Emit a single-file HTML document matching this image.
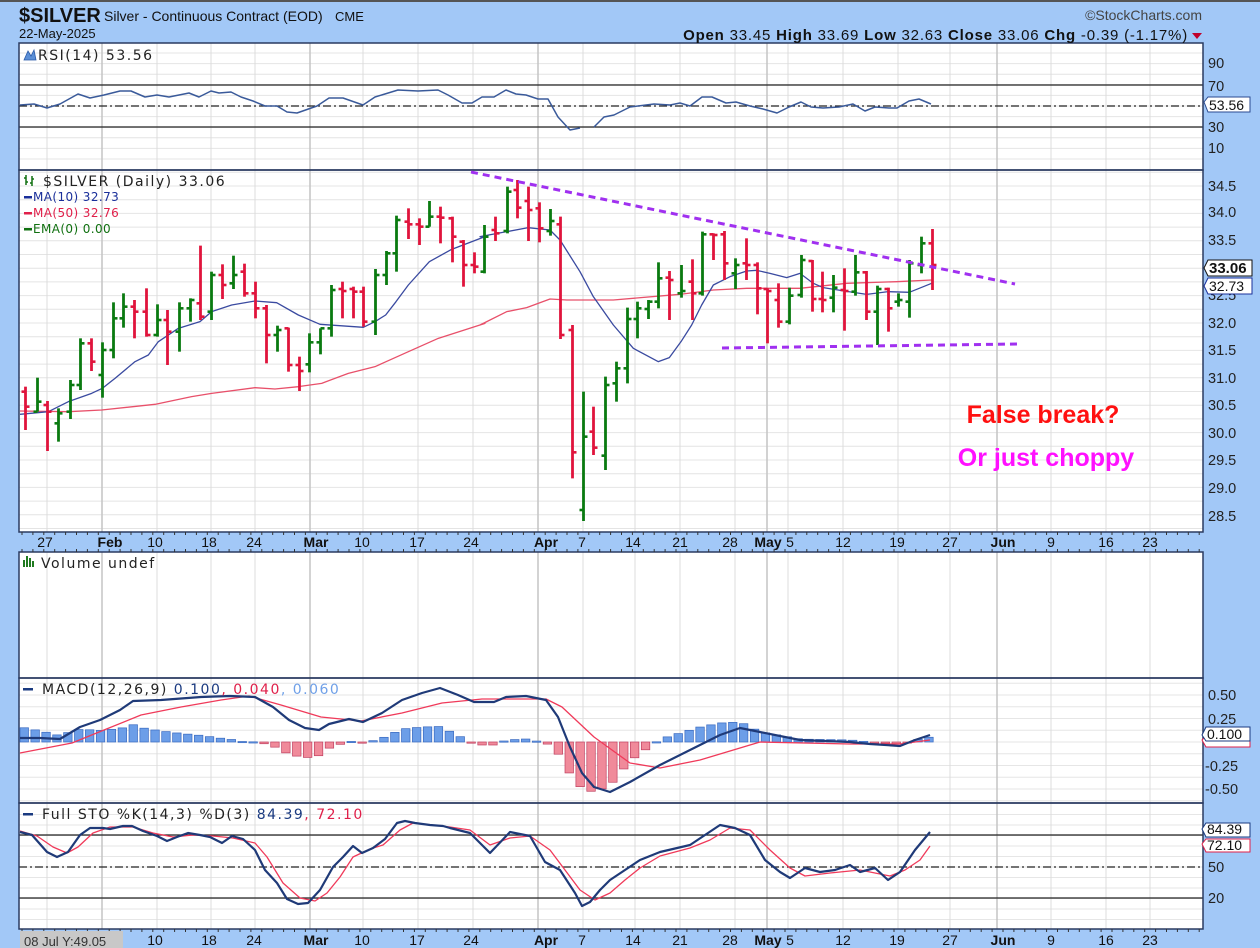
<!DOCTYPE html>
<html><head><meta charset="utf-8">
<style>
html,body{margin:0;padding:0;background:#a2c8f7;}
body{width:1260px;height:948px;overflow:hidden;position:relative;font-family:"Liberation Sans",sans-serif;}
svg{position:absolute;left:0;top:0;}
</style></head>
<body>
<svg id="s" width="1260" height="948" xmlns="http://www.w3.org/2000/svg" font-family="Liberation Sans, sans-serif">
<rect x="0" y="0" width="1260" height="2" fill="#555"/>
<g id="panels"></g>
<g id="grid"></g>
<g id="lines"></g>
<g id="data"></g>
<g id="txt">
<text x="19" y="22" font-size="20" font-weight="bold" fill="#111">$SILVER</text>
<text x="104" y="21" font-size="14" fill="#111">Silver - Continuous Contract (EOD)</text>
<text x="335" y="21" font-size="13" fill="#111">CME</text>
<text x="19" y="38" font-size="13" fill="#111">22-May-2025</text>
<text x="1202" y="20" font-size="14" fill="#444" text-anchor="end">©StockCharts.com</text>
<text x="1188" y="40" font-size="15" letter-spacing="0.8" fill="#111" text-anchor="end"><tspan font-weight="bold">Open</tspan> 33.45  <tspan font-weight="bold">High</tspan> 33.69  <tspan font-weight="bold">Low</tspan> 32.63  <tspan font-weight="bold">Close</tspan> 33.06  <tspan font-weight="bold">Chg</tspan> -0.39 (-1.17%)</text>
<path d="M1192,33 L1202,33 L1197,39 Z" fill="#c0002a"/>
<g font-family="DejaVu Sans, sans-serif" font-size="14" letter-spacing="1.5">
<text x="38" y="60" fill="#222">RSI(14) 53.56</text>
<path d="M24,60 L28,51 L31,56 L34,50 L36,60 Z" fill="#5b8fd6" stroke="#2a5aa8" stroke-width="0.8"/>
<text x="43" y="186" fill="#222">$SILVER (Daily) 33.06</text>
<g stroke="#107010" stroke-width="1.5"><path d="M26,175v10M24,178h2M26,182h2M32,176v10M30,183h2M32,179h2"/></g>
<g font-size="12" letter-spacing="0.4">
<rect x="24" y="196" width="8" height="2.5" fill="#1a2f9a"/><text x="33" y="201" fill="#1a2f9a">MA(10) 32.73</text>
<rect x="24" y="212" width="8" height="2.5" fill="#e0204a"/><text x="33" y="217" fill="#e0204a">MA(50) 32.76</text>
<rect x="24" y="228" width="8" height="2.5" fill="#107010"/><text x="33" y="233" fill="#107010">EMA(0) 0.00</text>
</g>
<g fill="#207a20"><rect x="23" y="560" width="2" height="7"/><rect x="26" y="556" width="2" height="11"/><rect x="29" y="558" width="2" height="9"/><rect x="32" y="561" width="2" height="6"/></g>
<text x="41" y="568" fill="#222">Volume undef</text>
<rect x="23" y="688" width="10" height="2.5" fill="#1a3a80"/>
<text x="42" y="694" fill="#222">MACD(12,26,9) <tspan fill="#1a3a80">0.100</tspan><tspan fill="#e0204a">, 0.040</tspan><tspan fill="#6fa0e8">, 0.060</tspan></text>
<rect x="23" y="813" width="10" height="2.5" fill="#1a3a80"/>
<text x="42" y="819" fill="#222">Full STO %K(14,3) %D(3) <tspan fill="#1a3a80">84.39</tspan><tspan fill="#e0204a">, 72.10</tspan></text>
</g>
<text x="1043" y="423" font-size="25" font-weight="bold" fill="#ff1010" text-anchor="middle">False break?</text>
<text x="1046" y="466" font-size="25" font-weight="bold" fill="#ff10ff" text-anchor="middle">Or just choppy</text>
<g font-size="14.5" fill="#222" id="axisR">
<text x="1208" y="68">90</text><text x="1208" y="91">70</text><text x="1208" y="132">30</text><text x="1208" y="153">10</text>
<text x="1208" y="191">34.5</text><text x="1208" y="217">34.0</text><text x="1208" y="245">33.5</text><text x="1208" y="300">32.5</text><text x="1208" y="328">32.0</text><text x="1208" y="355">31.5</text><text x="1208" y="383">31.0</text><text x="1208" y="410">30.5</text><text x="1208" y="438">30.0</text><text x="1208" y="465">29.5</text><text x="1208" y="493">29.0</text><text x="1208" y="521">28.5</text>
<text x="1208" y="700">0.50</text><text x="1208" y="724">0.25</text><text x="1205" y="771">-0.25</text><text x="1205" y="794">-0.50</text>
<text x="1208" y="872">50</text><text x="1208" y="903">20</text>
</g>
<g font-size="14">
<path d="M1204,102 L1208,97 L1250,97 L1250,112 L1208,112 Z" fill="#fff" stroke="#2a4a90"/><text x="1209" y="110" fill="#111">53.56</text>
<path d="M1204,268 L1208,260 L1252,260 L1252,276 L1208,276 Z" fill="#fff" stroke="#111"/><text x="1209" y="273" font-weight="bold" fill="#111" font-size="15">33.06</text>
<path d="M1204,286 L1208,278 L1252,278 L1252,294 L1208,294 Z" fill="#fff" stroke="#1a2f9a"/><text x="1209" y="291" fill="#111">32.73</text>
<path d="M1202,740 L1206,736 L1250,736 L1250,747 L1206,747 Z" fill="#fff" stroke="#e0204a"/>
<path d="M1202,735 L1206,727 L1250,727 L1250,741 L1206,741 Z" fill="#fff" stroke="#1a3a80"/><text x="1207" y="739" fill="#111">0.100</text>
<path d="M1202,844 L1206,839 L1250,839 L1250,852 L1206,852 Z" fill="#fff" stroke="#e0204a"/><text x="1207" y="850" fill="#111">72.10</text>
<path d="M1202,829 L1206,823 L1250,823 L1250,837 L1206,837 Z" fill="#fff" stroke="#1a3a80"/><text x="1207" y="834" fill="#111">84.39</text>
</g>
<g font-size="14" fill="#111" text-anchor="middle">
<text x="45" y="547">27</text><text x="110" y="547" font-weight="bold">Feb</text><text x="155" y="547">10</text><text x="209" y="547">18</text><text x="254" y="547">24</text><text x="316" y="547" font-weight="bold">Mar</text><text x="362" y="547">10</text><text x="417" y="547">17</text><text x="471" y="547">24</text><text x="546" y="547" font-weight="bold">Apr</text><text x="582" y="547">7</text><text x="633" y="547">14</text><text x="680" y="547">21</text><text x="730" y="547">28</text><text x="768" y="547" font-weight="bold">May</text><text x="790" y="547">5</text><text x="843" y="547">12</text><text x="897" y="547">19</text><text x="950" y="547">27</text><text x="1003" y="547" font-weight="bold">Jun</text><text x="1051" y="547">9</text><text x="1106" y="547">16</text><text x="1150" y="547">23</text>
</g>
<rect x="20" y="931" width="103" height="17" fill="#c8c8c8"/>
<text x="24" y="946" font-size="13" fill="#333">08 Jul Y:49.05</text>
<g font-size="14" fill="#111" text-anchor="middle">
<text x="155" y="945">10</text><text x="209" y="945">18</text><text x="254" y="945">24</text><text x="316" y="945" font-weight="bold">Mar</text><text x="362" y="945">10</text><text x="417" y="945">17</text><text x="471" y="945">24</text><text x="546" y="945" font-weight="bold">Apr</text><text x="582" y="945">7</text><text x="633" y="945">14</text><text x="680" y="945">21</text><text x="730" y="945">28</text><text x="768" y="945" font-weight="bold">May</text><text x="790" y="945">5</text><text x="843" y="945">12</text><text x="897" y="945">19</text><text x="950" y="945">27</text><text x="1003" y="945" font-weight="bold">Jun</text><text x="1051" y="945">9</text><text x="1106" y="945">16</text><text x="1150" y="945">23</text>
</g>
</g>
</svg>
<script>
(function(){
var NS="http://www.w3.org/2000/svg";
function el(g,t,a){var e=document.createElementNS(NS,t);for(var k in a)e.setAttribute(k,a[k]);document.getElementById(g).appendChild(e);return e;}
var L=19,R=1203;
var panels=[[43,170],[170,532],[552,678],[678,803],[803,929]];
panels.forEach(function(p){el("panels","rect",{x:L,y:p[0],width:R-L,height:p[1]-p[0],fill:"#fff"});});
function hl(y,c,w,d){var a={x1:L,x2:R,y1:y,y2:y,stroke:c,"stroke-width":w||1};if(d)a["stroke-dasharray"]=d;el("grid","line",a);}
for(var v=0;v<=100;v+=10){var y=106-(v-50)*1.06;if(y>44&&y<169)hl(y,"#e4e4e4");}
for(var p=28.25;p<=34.75;p+=0.25){var y=186+(34.5-p)*54.8;if(y>171&&y<531)hl(y,"#e4e4e4");}
for(var m=-0.75;m<=0.75;m+=0.125){var y=742-m*94;if(y>679&&y<802)hl(y,"#e6e6e6");}
for(var s=0;s<=100;s+=10){var y=867-(s-50)*1.05;if(y>804&&y<928)hl(y,"#e6e6e6");}
var wk=[47,102,157,211,255,310,363,418,473,538,583,635,680,735,767,788,843,898,950,997,1051,1106,1150];
var mon=[102,310,538,767,997];
wk.forEach(function(x){var dark=mon.indexOf(x)>=0;panels.forEach(function(p){el("grid","line",{x1:x,x2:x,y1:p[0],y2:p[1],stroke:dark?"#c4c4c4":"#dcdcdc","stroke-width":dark?1.5:1});});});
hl(85,"#222",1.2);hl(127,"#222",1.2);hl(106,"#222",1.2,"8,3,2,3");
hl(835,"#222",1.2);hl(898,"#222",1.2);hl(867,"#222",1.2,"8,3,2,3");
panels.forEach(function(p){el("lines","rect",{x:L,y:p[0],width:R-L,height:p[1]-p[0],fill:"none",stroke:"#2a3a60","stroke-width":1.5});});
for(var x=L+3;x<R;x+=10.9){el("lines","line",{x1:x,x2:x,y1:532,y2:535,stroke:"#333"});el("lines","line",{x1:x,x2:x,y1:549,y2:552,stroke:"#333"});el("lines","line",{x1:x,x2:x,y1:929,y2:932,stroke:"#333"});}
function poly(pts,c,w,g){el(g||"data","polyline",{points:pts.map(function(p){return p[0]+","+p[1];}).join(" "),fill:"none",stroke:c,"stroke-width":w||1.5,"stroke-linejoin":"round"});}
poly([[20,105],[34,104],[47,108],[60,104],[78,94],[90,98],[104,95],[120,91],[131,91],[145,97],[157,95],[169,97],[189,93],[199,97],[211,91],[219,93],[231,92],[241,97],[253,101],[265,106],[277,106],[287,112],[297,113],[317,106],[329,98],[343,98],[363,105],[375,97],[398,90],[418,91],[438,90],[448,95],[462,103],[472,103],[482,97],[494,97],[506,90],[516,94],[526,95],[538,99],[548,99],[558,117],[570,130],[580,128]],"#3a5a9a",1.5);
poly([[594,127],[604,117],[614,115],[630,107],[654,104],[670,105],[680,103],[690,106],[702,97],[712,97],[726,103],[736,102],[750,106],[763,109],[777,113],[789,107],[801,102],[811,107],[823,108],[839,107],[853,104],[865,111],[875,107],[889,108],[897,108],[909,101],[919,99],[931,104]],"#3a5a9a",1.5);
function cv(pts,ox){return pts.map(function(p){return [ox+p[0]/3,165+p[1]/3];});}
var ma50=cv([[15,738],[160,740],[260,735],[420,718],[530,695],[590,685],[720,668],[780,672],[850,665],[920,655],[1000,625],[1080,605],[1180,560],[1270,520],[1410,475]],15).concat(cv([[0,480],[80,440],[140,428],[210,402],[260,405],[400,405],[600,388],[700,375],[800,370],[960,370],[1100,355],[1250,350],[1355,345]],480));
var ma10=cv([[15,748],[100,740],[160,710],[230,685],[262,670],[300,640],[360,590],[400,570],[430,530],[490,490],[555,470],[590,440],[650,420],[720,408],[785,413],[850,450],[915,478],[1045,487],[1080,470],[1112,450],[1143,410],[1180,360],[1243,290],[1310,253],[1410,215]],15).concat(cv([[0,215],[80,200],[145,188],[210,195],[240,225],[300,320],[340,395],[400,480],[460,550],[535,590],[568,578],[603,530],[635,480],[665,420],[700,360],[750,335],[800,318],[830,316],[870,325],[920,338],[960,325],[1000,355],[1030,368],[1093,378],[1160,388],[1225,380],[1288,382],[1355,355]],480));
poly(ma50,"#e8506a",1.3);poly(ma10,"#3a4aa0",1.3);
var b7=[[30,665,795,680,725,0],[65,638,740,740,710,1],[97,708,858,720,740,0],[128,730,830,775,745,1],[165,645,762,740,660,1],[196,520,675,660,535,1],[228,520,618,535,590,0],[262,532,698,630,555,1],[295,412,580,555,460,1],[325,385,488,460,425,1],[357,405,520,425,440,0],[393,370,515,440,510,0],[425,418,515,510,465,1],[457,435,600,465,500,0],[492,412,560,500,430,1],[525,400,470,430,405,1],[555,242,465,415,455,0],[587,320,465,440,330,1],[622,298,402,330,360,0],[655,272,372,355,330,1],[686,296,395,320,385,0],[720,350,460,385,430,0],[752,420,595,430,510,0],[785,482,560,510,495,1],[818,488,620,490,600,0],[852,575,678,600,618,0],[883,505,622,598,532,1],[915,490,568,532,490,1],[948,360,515,490,375,1],[980,350,460,372,378,0],[1013,365,460,372,380,0],[1045,365,485,380,470,0],[1080,312,510,470,330,1],[1112,258,360,330,265,1],[1143,152,320,265,165,1],[1178,130,222,170,178,0],[1212,160,240,178,185,0],[1243,108,185,185,155,1],[1276,125,235,155,158,0],[1310,155,292,160,215,0],[1343,225,365,230,300,0],[1377,262,325,300,305,0],[1408,180,325,320,215,1]];
var b8=[[45,155,228,195,205,0],[80,65,205,198,80,1],[110,45,160,75,128,0],[145,65,228,108,135,0],[178,112,232,130,190,0],[210,132,212,198,168,1],[240,155,522,178,510,0],[275,480,940,495,862,0],[308,680,1068,1035,815,1],[340,725,870,800,848,0],[375,635,915,872,660,1],[408,590,710,655,610,1],[440,428,655,610,462,1],[470,410,520,462,430,1],[505,405,462,432,410,1],[535,292,430,410,340,1],[568,318,465,338,345,0],[603,300,398,385,378,1],[635,283,465,350,385,0],[665,200,392,385,208,1],[698,205,285,208,210,0],[732,198,345,208,295,0],[765,280,372,325,300,1],[797,220,345,295,300,0],[830,292,448,300,370,0],[862,370,535,372,378,0],[895,355,488,405,470,0],[928,368,478,470,392,1],[963,270,398,390,285,1],[995,285,440,288,402,0],[1025,320,442,402,405,0],[1060,330,442,398,368,1],[1093,310,497,375,378,0],[1125,270,392,380,322,1],[1158,318,465,322,440,0],[1192,362,540,440,372,1],[1225,368,500,372,430,0],[1255,385,425,410,405,1],[1288,285,458,410,295,1],[1323,215,325,300,235,1],[1355,192,375,235,300,0]];
function bars(list,ox){list.forEach(function(b){var x=Math.round(ox+b[0]/3)+0.5,c=b[5]?"#0a7a10":"#e0143c";var Y=function(v){return 165+v/3;};
el("data","line",{x1:x,x2:x,y1:Y(b[1]),y2:Y(b[2]),stroke:c,"stroke-width":2.8});
el("data","line",{x1:x-4,x2:x,y1:Y(b[3]),y2:Y(b[3]),stroke:c,"stroke-width":2.6});
el("data","line",{x1:x,x2:x+4,y1:Y(b[4]),y2:Y(b[4]),stroke:c,"stroke-width":2.6});});}
bars(b7,15);bars(b8,480);
el("data","line",{x1:471,y1:172,x2:1015,y2:284,stroke:"#a030f0","stroke-width":3,"stroke-dasharray":"7,5"});
el("data","line",{x1:722,y1:348,x2:1018,y2:344,stroke:"#a030f0","stroke-width":3,"stroke-dasharray":"7,5"});
var mac=[[20,738],[40,738],[60,739],[80,727],[100,720],[120,710],[133,701],[161,700],[201,697],[230,696],[255,697],[273,707],[289,720],[305,728],[319,730],[329,724],[349,719],[363,722],[382,713],[402,700],[422,693],[440,688],[458,695],[474,702],[494,702],[506,697],[526,696],[546,700],[558,717],[570,747],[582,773],[594,787],[610,792],[630,782],[660,765],[700,745],[720,735],[740,728],[760,732],[800,740],[850,742],[870,744],[900,746],[915,740],[930,735]];
var sig=[[20,753],[72,743],[104,730],[141,715],[181,707],[221,700],[249,696],[281,705],[321,717],[361,721],[402,713],[442,703],[482,699],[546,699],[562,707],[594,737],[630,763],[660,768],[700,760],[760,742],[850,744],[900,744],[930,740]];
function at(a,x){for(var i=1;i<a.length;i++){if(x<=a[i][0]){var t=(x-a[i-1][0])/(a[i][0]-a[i-1][0]);return a[i-1][1]+t*(a[i][1]-a[i-1][1]);}}return a[a.length-1][1];}
for(var x=24;x<=932;x+=10.9){var h=at(mac,x)-at(sig,x);var y=742+h;var pos=h<0;
el("data","rect",{x:x-4,y:Math.min(742,y),width:8.5,height:Math.max(1.2,Math.abs(h)),fill:pos?"#6c9ee8":"#f08a9a",stroke:pos?"#3a6ac0":"#c04060","stroke-width":0.7});}
poly(sig,"#f03a5a",1.3);poly(mac,"#1f3a78",2.2);
var k=[[20,832],[32,835],[47,852],[57,857],[68,852],[80,835],[90,828],[103,828],[110,829],[123,826],[132,826],[143,831],[157,836],[167,841],[177,837],[188,833],[200,835],[210,837],[222,843],[232,836],[243,839],[255,850],[265,870],[277,883],[287,899],[298,904],[308,903],[320,890],[333,867],[343,857],[353,846],[362,853],[373,848],[385,839],[397,823],[405,821],[415,823],[430,825],[443,826],[450,828],[470,833],[490,853],[510,832],[530,836],[545,862],[560,870],[575,893],[582,906],[590,902],[600,890],[610,880],[625,870],[640,860],[660,852],[690,845],[705,835],[720,825],[735,828],[750,835],[765,860],[780,872],[790,878],[805,868],[820,872],[835,870],[850,865],[860,872],[875,868],[888,880],[900,872],[915,850],[930,832]];
var d=[[20,831],[37,836],[53,847],[67,853],[78,847],[93,833],[110,827],[133,827],[153,833],[173,837],[193,835],[213,836],[233,838],[255,843],[267,857],[283,883],[300,898],[315,901],[327,893],[340,877],[353,857],[370,849],[383,845],[400,830],[413,823],[450,827],[470,830],[490,845],[510,838],[530,836],[550,850],[565,870],[580,890],[595,900],[610,893],[625,880],[640,868],[660,856],[690,848],[710,840],[730,828],[750,830],[770,850],[790,868],[805,876],[830,873],[860,870],[890,876],[905,870],[920,860],[930,846]];
poly(d,"#f03a5a",1.3);poly(k,"#1f3a78",2.2);
})();
</script>
</body></html>
